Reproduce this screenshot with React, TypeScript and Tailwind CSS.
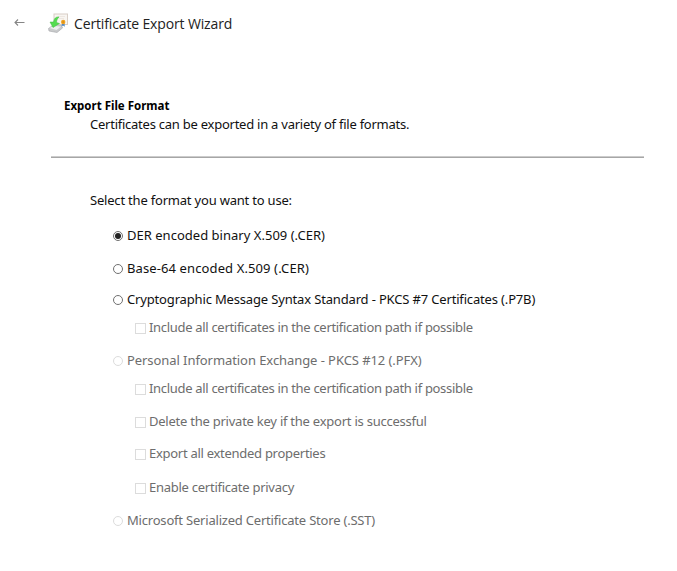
type Option = {
  label: string;
  kind: "radio" | "checkbox";
  checked?: boolean;
  disabled?: boolean;
  row: string;
  text: string;
};

const options: Option[] = [
  { label: "DER encoded binary X.509 (.CER)", kind: "radio", checked: true, row: "", text: "tracking-[0.02px]" },
  { label: "Base-64 encoded X.509 (.CER)", kind: "radio", row: "mt-[13px]", text: "tracking-[0.11px]" },
  { label: "Cryptographic Message Syntax Standard - PKCS #7 Certificates (.P7B)", kind: "radio", row: "mt-[11px]", text: "tracking-[-0.16px]" },
  { label: "Include all certificates in the certification path if possible", kind: "checkbox", disabled: true, row: "mt-2", text: "tracking-[-0.31px]" },
  { label: "Personal Information Exchange - PKCS #12 (.PFX)", kind: "radio", disabled: true, row: "mt-[13px]", text: "tracking-[-0.07px]" },
  { label: "Include all certificates in the certification path if possible", kind: "checkbox", disabled: true, row: "mt-2", text: "tracking-[-0.31px]" },
  { label: "Delete the private key if the export is successful", kind: "checkbox", disabled: true, row: "mt-[13px]", text: "tracking-[-0.24px]" },
  { label: "Export all extended properties", kind: "checkbox", disabled: true, row: "mt-3", text: "tracking-[-0.28px]" },
  { label: "Enable certificate privacy", kind: "checkbox", disabled: true, row: "mt-[14px]", text: "tracking-[-0.26px]" },
  { label: "Microsoft Serialized Certificate Store (.SST)", kind: "radio", disabled: true, row: "mt-[13px]", text: "tracking-[-0.2px]" },
];

function Mark({ kind, checked, disabled }: Option) {
  if (kind === "checkbox") {
    return <span className="mr-[3px] size-[11px] shrink-0 border border-[#dcdcdc] bg-white" />;
  }
  return (
    <span
      className={`mr-[4px] flex size-[10px] shrink-0 items-center justify-center rounded-full border bg-white ${
        disabled ? "border-[#dcdcdc]" : "border-[#707070]"
      }`}
    >
      {checked && <span className="size-[6px] rounded-full bg-[#222]" />}
    </span>
  );
}

function OptionRow(option: Option) {
  return (
    <label
      className={`flex h-5 items-center ${option.kind === "checkbox" ? "pl-[135px]" : "pl-[113px]"} ${option.row}`}
    >
      <Mark {...option} />
      <span className={`mb-[2px] leading-5 whitespace-nowrap ${option.disabled ? "text-[#6d6d6d]" : "text-[#111]"} ${option.text}`}>
        {option.label}
      </span>
    </label>
  );
}

function WizardIcon() {
  return (
    <svg width="20" height="20" viewBox="0 0 20 20" className="shrink-0">
      <rect x="6" y="1" width="13.500" height="10.500" fill="#f8f5f1" stroke="#d8cec6" />
      <path d="M10 3.500h7M11 5.500h5" stroke="#eae2dc" strokeWidth="0.8" />
      <path d="M0.500 15.500 4 13l9.500-.500 1 2.500-5.500 4.500-8-1.500Z" fill="#c9cbcc" stroke="#a3a5a7" strokeWidth="0.6" />
      <path d="m1.500 15 4-2 7.500.5-4.500 3.500Z" fill="#eeefef" />
      <path d="M11 4C8 3.500 6 5.500 5.500 9L2 9 5 14.500 11.500 10.500 8.500 9.500C8.500 7.500 9.500 5.500 11 4Z" fill="#55dc50" stroke="#3fbd43" strokeWidth="0.5" />
      <path d="m14 10.500-.500 3 1.500-1 1.800 1.200-.300-3.200Z" fill="#4b86c6" />
      <circle cx="15.200" cy="9" r="2.200" fill="#f0a423" />
      <circle cx="15.200" cy="9" r="0.900" fill="#dc8c13" />
    </svg>
  );
}

export default function App() {
  return (
    <main className="h-[571px] w-[677px] overflow-hidden bg-white font-['Noto_Sans',sans-serif] text-[13px] text-[#111]">
      <header className="flex h-[46px] items-center pl-[14px]">
        <svg width="11" height="9" viewBox="0 0 11 9" className="mr-[23px] mb-[2px] shrink-0" fill="none" stroke="#858585" strokeWidth="1.1">
          <path d="M10.500 4.500H1M4 1.500 1 4.500 4 7.500" />
        </svg>
        <WizardIcon />
        <h1 className="mt-[2px] ml-[6px] font-['Open_Sans',sans-serif] text-[14px] leading-5 tracking-[-0.14px] whitespace-nowrap text-[#222]">
          Certificate Export Wizard
        </h1>
      </header>
      <section className="mt-[51px] h-[59px]">
        <h2 className="h-[17px] pl-[64px] text-[11.5px] leading-[18px] font-bold whitespace-nowrap text-black">
          Export File Format
        </h2>
        <p className="pl-[90px] leading-5 tracking-[-0.245px] whitespace-nowrap">
          Certificates can be exported in a variety of file formats.
        </p>
      </section>
      <hr className="ml-[51px] h-[2px] w-[593px] border-t border-b border-t-[#cccccc] border-b-[#a6a6a6]" />
      <p className="mt-[32px] mb-4 pl-[90px] leading-5 tracking-[-0.2px] whitespace-nowrap">
        Select the format you want to use:
      </p>
      {options.map((option, i) => (
        <OptionRow key={i} {...option} />
      ))}
    </main>
  );
}
